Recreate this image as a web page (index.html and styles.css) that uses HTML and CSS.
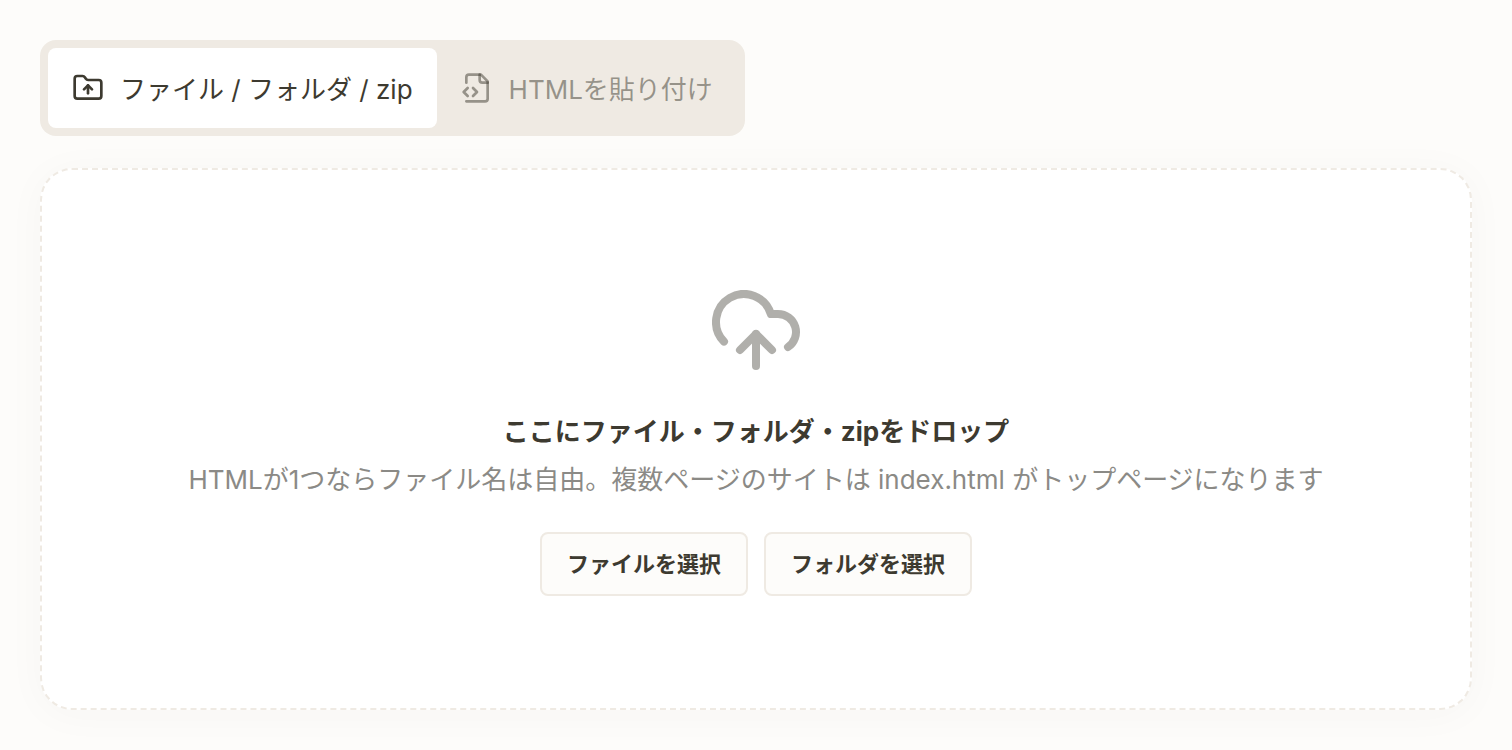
FILE: index.html
```html
<!DOCTYPE html>
<html lang="ja">
<head>
    <meta charset="UTF-8">
    <meta name="viewport" content="width=device-width, initial-scale=1.0">
    <title>アップロード</title>
    <link rel="stylesheet" href="styles.css">
</head>
<body>

<main class="uploader">
    <div class="tabs" role="tablist">
        <button type="button" class="tab active" role="tab" aria-selected="true">
            <svg class="tab-icon" viewBox="0 0 24 24" aria-hidden="true">
                <path d="M20 20a2 2 0 0 0 2-2V8a2 2 0 0 0-2-2h-7.9a2 2 0 0 1-1.69-.9L9.6 3.9A2 2 0 0 0 7.93 3H4a2 2 0 0 0-2 2v13a2 2 0 0 0 2 2Z"/>
                <path d="M12 10v6"/>
                <path d="m9 13 3-3 3 3"/>
            </svg>
            <span class="tab-label">ファイル / フォルダ / zip</span>
        </button>
        <button type="button" class="tab" role="tab" aria-selected="false">
            <svg class="tab-icon" viewBox="0 0 24 24" aria-hidden="true">
                <path d="M4 22h14a2 2 0 0 0 2-2V7l-5-5H6a2 2 0 0 0-2 2v4"/>
                <path d="M14 2v4a2 2 0 0 0 2 2h4"/>
                <path d="m5 12-3 3 3 3"/>
                <path d="m9 18 3-3-3-3"/>
            </svg>
            <span class="tab-label">HTMLを貼り付け</span>
        </button>
    </div>

    <section class="dropzone">
        <svg class="cloud-icon" viewBox="0 0 24 24" aria-hidden="true">
            <path d="M12 13v8"/>
            <path d="M4 14.899A7 7 0 1 1 15.71 8h1.79a4.5 4.5 0 0 1 2.5 8.242"/>
            <path d="m8 17 4-4 4 4"/>
        </svg>
        <p class="drop-title">ここにファイル・フォルダ・zipをドロップ</p>
        <p class="drop-hint">HTMLが1つならファイル名は自由。複数ページのサイトは index.html がトップページになります</p>
        <div class="actions">
            <button type="button" class="pick-button">ファイルを選択</button>
            <button type="button" class="pick-button">フォルダを選択</button>
        </div>
    </section>
</main>

</body>
</html>
```
FILE: styles.css
```css
* {
    box-sizing: border-box;
}
body {
    margin: 0;
    background-color: #fdfcfa;
    color: #3d3a30;
    font-family: Inter, "Noto Sans CJK JP", sans-serif;
    font-optical-sizing: none;
    font-size: 26px;
    line-height: 40px;
}
button {
    font-family: inherit;
    font-optical-sizing: inherit;
    color: inherit;
    cursor: pointer;
}
svg {
    flex-shrink: 0;
    fill: none;
    stroke: currentColor;
    stroke-linecap: round;
    stroke-linejoin: round;
}
.uploader {
    display: flex;
    flex-direction: column;
    align-items: flex-start;
    gap: 32px;
    padding: 40px;
}

/* タブ */
.tabs {
    display: flex;
    padding: 8px;
    border-radius: 16px;
    background-color: #efeae3;
}
.tab {
    display: flex;
    align-items: center;
    gap: 16px;
    padding: 20px 24px;
    border: none;
    border-radius: 8px;
    background: none;
    color: rgba(61, 58, 48, 0.5);
    font-size: 26px;
    font-weight: 400;
    line-height: 36px;
}
.tab.active {
    background-color: #fff;
    color: #3d3a30;
}
.tab-icon {
    width: 32px;
    height: 32px;
    stroke-width: 2;
}
.tab-label {
    padding-top: 4px;
}

/* ドロップ領域 */
.dropzone {
    display: flex;
    flex-direction: column;
    align-items: center;
    width: 100%;
    padding: 112px 48px;
    border: 2px dashed #efeae3;
    border-radius: 32px;
    background-color: #fff;
    box-shadow: 0 4px 40px rgba(61, 58, 48, 0.03);
    text-align: center;
}
.cloud-icon {
    width: 96px;
    height: 96px;
    margin-bottom: 34px;
    stroke-width: 2;
    opacity: 0.4;
}
.drop-title {
    margin: 0 0 8px;
    font-weight: 700;
}
.drop-hint {
    margin: 0 0 32px;
    color: #8b8a86;
}
.actions {
    display: flex;
    gap: 16px;
}
.pick-button {
    padding: 14px 25px;
    border: 2px solid #efeae3;
    border-radius: 8px;
    background-color: #fdfcfa;
    font-size: 22px;
    font-weight: 700;
    line-height: 32px;
}
```
